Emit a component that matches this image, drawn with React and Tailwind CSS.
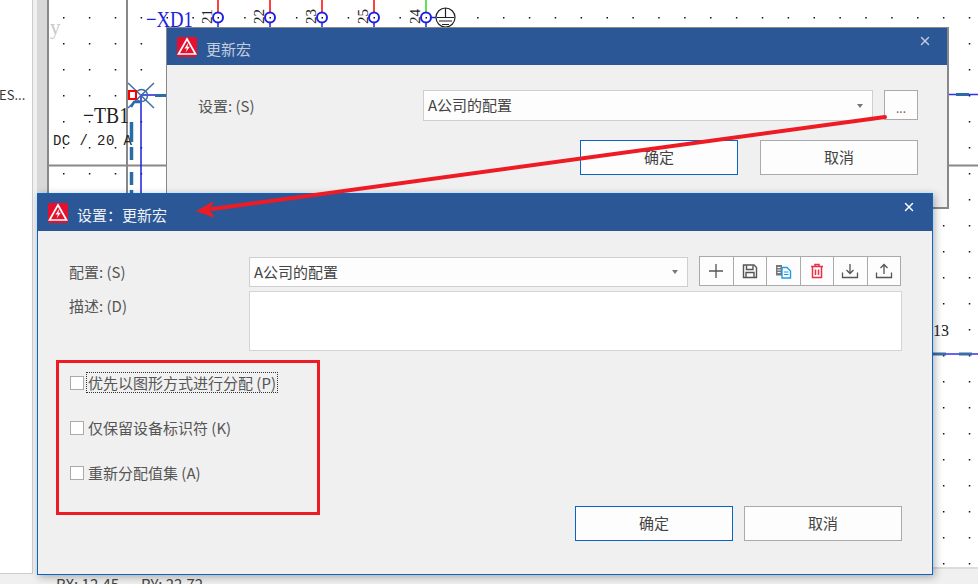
import { X } from 'lucide-react';

const dotXs = Array.from({ length: 36 }, (_, i) => 63 + i * 25.88);
const dotYs = Array.from({ length: 22 }, (_, i) => 17 + i * 26);
const terminals = [
  { x: 218, label: '21', wire: '#ff0000' },
  { x: 270, label: '22', wire: '#ff0000' },
  { x: 322, label: '23', wire: '#ff0000' },
  { x: 374, label: '25', wire: '#ff0000' },
  { x: 426, label: '24', wire: '#22dd22' },
];

function Schematic() {
  return (
    <svg viewBox="47 0 931 569" className="block w-[931px] h-[569px] bg-white">
      {dotXs.map(x => dotYs.map(y => <rect key={`${x}-${y}`} x={x} y={y} width="1.5" height="1.5" fill="#111" />))}
      <path d="M48 0V569M127 0V193M48 165.5H978" stroke="#888" strokeWidth="2" fill="none" />

      <text x="50" y="34" fontFamily="Liberation Serif" fontSize="21" fill="#c8c8c8">y</text>
      <text x="146" y="27" fontFamily="Liberation Serif" fontSize="23" fill="#2020e0" textLength="47" lengthAdjust="spacingAndGlyphs">−XD1</text>
      <text x="83" y="123" fontFamily="Liberation Serif" fontSize="23" fill="#222" textLength="46" lengthAdjust="spacingAndGlyphs">−TB1</text>
      <text x="53" y="145" fontFamily="Liberation Mono" fontSize="14" fill="#222" textLength="79">DC / 20 A</text>
      <text x="933" y="336" fontFamily="Liberation Serif" fontSize="16" fill="#222">13</text>

      {terminals.map(t => (
        <g key={t.x}>
          <path d={`M${t.x} 0V12`} stroke={t.wire} strokeWidth="1.5" />
          <path d={`M${t.x} 22V28`} stroke="#2020e0" strokeWidth="1.5" />
          <circle cx={t.x} cy="17.5" r="5" fill="white" stroke="#2020e0" strokeWidth="2" />
          <rect x={t.x - 0.5} y="17" width="1.5" height="1.5" fill="#111" />
          <text transform={`translate(${t.x - 6} 24) rotate(-90)`} fontFamily="Liberation Serif" fontSize="15" fill="#222">{t.label}</text>
        </g>
      ))}
      <path d="M431 17.5H436" stroke="#2020e0" strokeWidth="1.5" />
      <circle cx="445.5" cy="17.5" r="9.5" fill="white" stroke="#222" strokeWidth="1.2" />
      <path d="M445.5 8V17M437 17.5H454M439 21H452M442 24.5H449" stroke="#222" strokeWidth="1.2" fill="none" />

      <path d="M141 95V200M141 95H170" stroke="#2020e0" strokeWidth="1.5" fill="none" />
      <path d="M155 95.5H170" stroke="#2b6ca8" strokeWidth="3" fill="none" />
      <path d="M128 83L154 108M154 83L128 108" stroke="#3d6da8" strokeWidth="1.5" />
      <circle cx="141.5" cy="95.5" r="6" fill="none" stroke="#3d6da8" strokeWidth="1.5" />
      <path d="M131 107L134 102H141" stroke="#2b6ca8" strokeWidth="2.5" fill="none" />
      <path d="M131.5 122V200" stroke="#2b6ca8" strokeWidth="3.5" strokeDasharray="20 5 13 12 13 5" fill="none" />
      <rect x="129" y="91" width="7" height="8" fill="white" stroke="#ff0000" strokeWidth="2" />

      <path d="M900 94.5H978" stroke="#3030f0" strokeWidth="1.5" />
      <path d="M956 94.5H969" stroke="#2b6ca8" strokeWidth="3" />
      <path d="M933 354H978" stroke="#3030f0" strokeWidth="1.5" />
      <path d="M933 354H946M959 354H972" stroke="#3d6da8" strokeWidth="3" />
      <path d="M47 568H978" stroke="#dcdcdc" strokeWidth="2" />
    </svg>
  );
}

function AppIcon() {
  return (
    <svg viewBox="0 0 20 20" className="w-5 h-5 shrink-0">
      <rect width="20" height="20" rx="2" fill="#e60f2d" />
      <path d="M10 2L18.5 17H1.5Z" fill="none" stroke="white" strokeWidth="1.7" />
      <path d="M11.5 5.5L7.5 11.5H10L8.5 15.5L12.8 9.8H10.4Z" fill="white" />
    </svg>
  );
}

function TitleBar({ title, active }) {
  return (
    <div className="flex items-center h-[37px] bg-[#2b5797] pl-[10px] shrink-0">
      <AppIcon />
      <span className={`ml-[9px] mt-[6px] text-[15px] ${active ? 'text-[#eef2f8]' : 'text-[#c3cddd]'}`}>{title}</span>
      <X size={14} strokeWidth={2.4} className={`ml-auto ${active ? 'mr-[16px] text-white' : 'mr-[15px] text-[#c3cddd]'} mb-[11px]`} />
    </div>
  );
}

function Combo({ width, value }) {
  return (
    <div className={`${width} h-full flex items-center bg-[#fdfdfd] border border-[#cfcfcf] pl-[4px] pr-[9px] text-[15px] text-[#444]`}>
      <span>{value}</span>
      <span className="ml-auto w-0 h-0 border-x-[3.5px] border-x-transparent border-t-[4px] border-t-[#777]" />
    </div>
  );
}

function DialogButton({ primary, children }) {
  return (
    <button className={`w-[158px] h-[35px] bg-[#fdfdfd] border text-[15px] text-[#444] ${primary ? 'border-[#0a64c8]' : 'border-[#aaaaaa]'}`}>
      {children}
    </button>
  );
}

function ToolButton({ children }) {
  return (
    <button className="w-[34.5px] h-[30px] flex items-center justify-center bg-[#fdfdfd] border border-[#aaaaaa] -ml-px first:ml-0">
      {children}
    </button>
  );
}

function Check({ label, focused }) {
  return (
    <div className="flex items-center h-[21px] text-[15px] text-[#555]">
      <span className="w-[14px] h-[14px] ml-px bg-white border border-[#aaaaaa] shrink-0" />
      <span className={`ml-[2px] pl-px pr-px h-[21px] leading-[19px] border border-dotted whitespace-nowrap ${focused ? 'border-[#333]' : 'border-transparent'}`}>{label}</span>
    </div>
  );
}

function BackDialog() {
  return (
    <div className="absolute left-[166px] top-[27px] w-[783px] h-[182px] flex flex-col bg-[#f0f0f0] border border-[#888] border-b-2 border-r-2">
      <TitleBar title="更新宏" />
      <div className="pl-[31px] pr-[29px] pt-[25px]">
        <div className="flex h-[31px]">
          <span className="w-[225px] text-[15px] leading-[31px] text-[#555]">设置: (S)</span>
          <Combo width="w-[450px]" value="A公司的配置" />
          <button className="ml-[11px] w-[34px] h-[30px] pt-[6px] bg-[#fdfdfd] border border-[#aaaaaa] text-[12px] text-[#8a5a40]">...</button>
        </div>
        <div className="flex justify-end gap-[22px] mt-[19px]">
          <DialogButton primary>确定</DialogButton>
          <DialogButton>取消</DialogButton>
        </div>
      </div>
    </div>
  );
}

function FrontDialog() {
  return (
    <div className="absolute left-[37px] top-[193px] w-[896px] h-[382px] flex flex-col bg-[#f0f0f0] border border-[#0a64c8] shadow-[2px_2px_8px_rgba(0,0,0,0.3)]">
      <TitleBar title="设置：更新宏" active />
      <div className="pl-[31px] pr-[30px] pt-[26px]">
        <div className="flex h-[30px]">
          <span className="w-[180px] text-[15px] leading-[29px] text-[#555]">配置: (S)</span>
          <Combo width="w-[439px]" value="A公司的配置" />
          <div className="ml-[11px] -mt-px flex h-[30px]">
            <ToolButton>
              <svg viewBox="0 0 18 18" className="w-[18px] h-[18px]"><path d="M9 2V16M2 9H16" stroke="#555" strokeWidth="1.3" /></svg>
            </ToolButton>
            <ToolButton>
              <svg viewBox="0 0 18 18" className="w-[18px] h-[18px]" fill="none" stroke="#555" strokeWidth="1.4"><path d="M2.5 3H13L15.5 5.5V15.5H2.5Z" /><path d="M5.5 3.5V7.5H12V3.5" /><path d="M5 15V10.5H13V15" /></svg>
            </ToolButton>
            <ToolButton>
              <svg viewBox="0 0 18 18" className="w-[18px] h-[18px]" fill="none"><path d="M2 3H8V13.5H2Z" fill="#777" /><path d="M3.5 5.5H6.5M3.5 8H6.5M3.5 10.5H6.5" stroke="white" /><path d="M8 5.5H13L16.5 9V16H8Z" fill="white" stroke="#1e9be8" strokeWidth="1.4" /><path d="M10 10H14.5M10 12.5H14.5" stroke="#1e9be8" /></svg>
            </ToolButton>
            <ToolButton>
              <svg viewBox="0 0 18 18" className="w-[18px] h-[18px]" fill="none" stroke="#f02d46" strokeWidth="1.5"><path d="M3 4.5H15M7 4V2.5H11V4" /><path d="M4.5 5V15.5H13.5V5" /><path d="M7.5 7.5V13M10.5 7.5V13" /></svg>
            </ToolButton>
            <ToolButton>
              <svg viewBox="0 0 18 18" className="w-[18px] h-[18px]" fill="none" stroke="#555" strokeWidth="1.3"><path d="M1.5 10.5V15.5H16.5V10.5" /><path d="M9 2V11M5.5 8L9 11.5L12.5 8" /></svg>
            </ToolButton>
            <ToolButton>
              <svg viewBox="0 0 18 18" className="w-[18px] h-[18px]" fill="none" stroke="#555" strokeWidth="1.3"><path d="M1.5 10.5V15.5H16.5V10.5" /><path d="M9 12V2.5M5.5 6L9 2.5L12.5 6" /></svg>
            </ToolButton>
          </div>
        </div>
        <div className="flex mt-[4px]">
          <span className="w-[180px] text-[15px] leading-[30px] text-[#555]">描述: (D)</span>
          <div className="w-[653px] h-[60px] bg-white border border-[#d4d4d4]" />
        </div>
        <div className="flex flex-col gap-[24px] mt-[21px]">
          <Check label="优先以图形方式进行分配 (P)" focused />
          <Check label="仅保留设备标识符 (K)" />
          <Check label="重新分配值集 (A)" />
        </div>
        <div className="flex justify-end gap-[11px] mt-[23px]">
          <DialogButton primary>确定</DialogButton>
          <DialogButton>取消</DialogButton>
        </div>
      </div>
    </div>
  );
}

export default function App() {
  return (
    <div className="relative w-[978px] h-[584px] overflow-hidden flex bg-[#f0f0f0] font-['Noto_Sans_CJK_SC','Noto_Sans',sans-serif]">
      <div className="w-[33px] h-[574px] bg-white border-r border-b border-[#cccccc] overflow-hidden shrink-0">
        <div className="pt-[85px] -ml-px text-[13px] text-[#333] whitespace-nowrap">ES...</div>
      </div>
      <div className="w-[14px] h-[574px] shrink-0 flex">
        <div className="w-[4px] bg-[#f0f0f0]" />
        <div className="flex-1 bg-[#d8d8d8]" />
      </div>
      <div className="flex-1 min-w-0">
        <Schematic />
        <div className="flex gap-[22px] pl-[9px] pt-[5px] text-[15px] leading-[20px] text-[#444]">
          <span>RX: 12.45</span>
          <span>RY: 22.72</span>
        </div>
      </div>

      <BackDialog />
      <FrontDialog />

      {/* annotations drawn on top of the capture */}
      <div className="absolute left-[56px] top-[360px] w-[264px] h-[155px] border-[3px] border-[#ed1c24]" />
      <svg viewBox="0 0 978 584" className="absolute inset-0 w-[978px] h-[584px] pointer-events-none">
        <path d="M885 117L212 209" stroke="#ed1c24" strokeWidth="4" strokeLinecap="round" />
        <path d="M197 211L213 202L209 210L214 217Z" fill="#ed1c24" stroke="#ed1c24" strokeWidth="1" />
      </svg>
    </div>
  );
}
